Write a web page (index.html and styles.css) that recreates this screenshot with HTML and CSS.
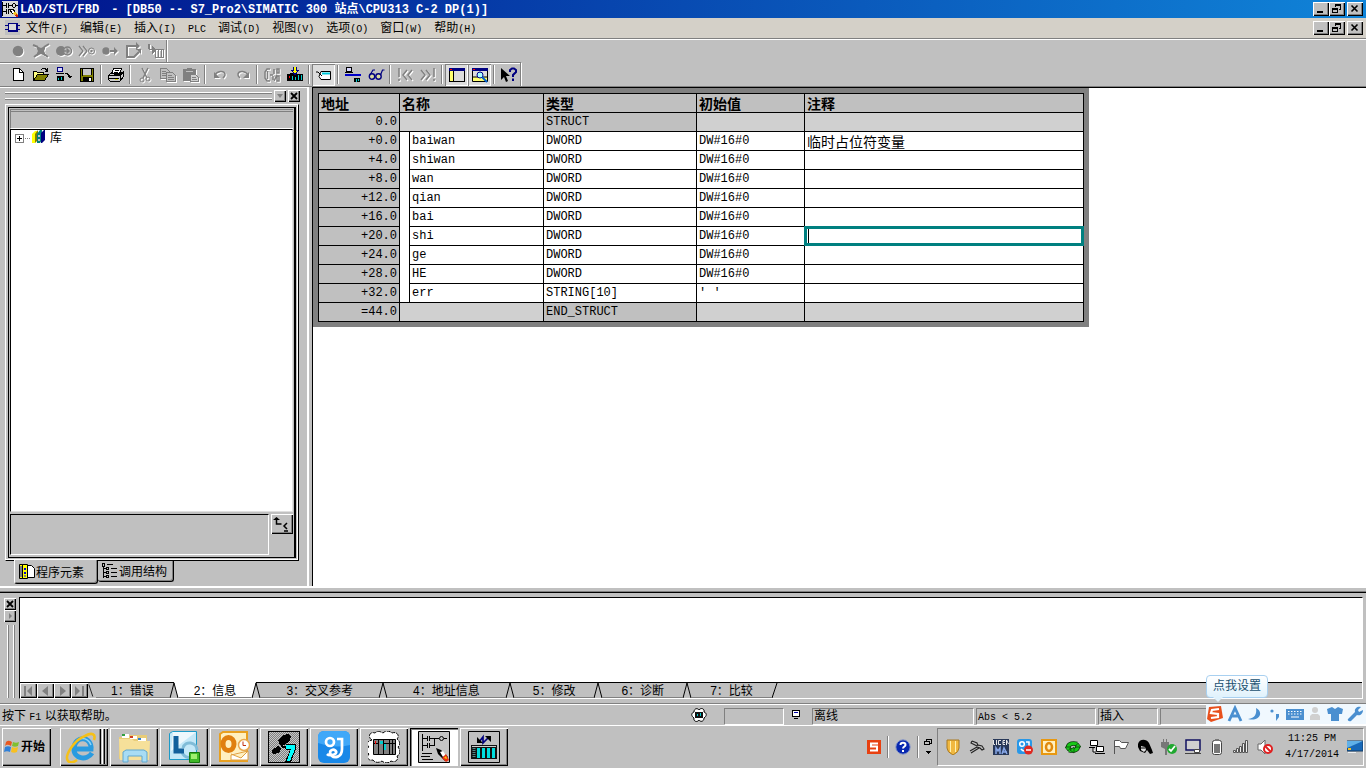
FILE: index.html
```html
<!DOCTYPE html>
<html lang="zh-CN">
<head>
<meta charset="utf-8">
<title>LAD/STL/FBD - DB50</title>
<link rel="stylesheet" href="styles.css">
</head>
<body>
<header class="titlebar">
  <svg class="app-icon" width="16" height="16" viewBox="0 0 16 16" shape-rendering="crispEdges"><path fill="#d8d8d8" d="M0 0h16v16H0z"/><path fill="none" stroke="#000" d="M.500 1v14M1 4.500h3M4.500 2v5M6.500 2v5M7 4.500h3M10.500 3v3M13.500 3v3M11 2.500h2M11 6.500h2M14 4.500h2M1 10.500h3M4.500 8v5M6.500 8v5"/><path fill="#fff" stroke="#000" d="M7 8l4 0 2 3-2 2z"/><path fill="#f0c020" d="M11 12l2-2 3 4-2 2z"/><path fill="#d02010" d="M13 14l2-2 1 4h-2z"/></svg>
  <h1 class="title"><span>LAD/STL/FBD</span><span>- [DB50 -- S7_Pro2\SIMATIC 300 站点\CPU313 C-2 DP(1)]</span></h1>
  <div class="winbtns">
    <button class="wb" aria-label="最小化"><svg width="12" height="10" viewBox="0 0 12 10"><path fill="#000" d="M2 7h6v2H2z"/></svg></button>
    <button class="wb" aria-label="还原"><svg width="12" height="10" viewBox="0 0 12 10" shape-rendering="crispEdges"><path fill="none" stroke="#000" d="M4.500 3V.5h5v5H8M4 1.500h6M1.500 4.500h5v4h-5zM1 5.500h6"/></svg></button>
    <button class="wb wb-close" aria-label="关闭"><svg width="12" height="10" viewBox="0 0 12 10"><path stroke="#000" stroke-width="1.600" d="M2.500 1.500l6 6M8.500 1.500l-6 6"/></svg></button>
  </div>
</header>

<nav class="menubar" aria-label="菜单">
  <svg class="doc-icon" width="15" height="15" viewBox="0 0 15 15" shape-rendering="crispEdges"><path fill="#c0c0c0" d="M0 0h15v15H0z"/><path fill="#000080" d="M3 3h10v9H3z"/><path fill="#d8d8d8" d="M4 4h7v6H4z"/><path stroke="#000080" d="M0 5.500h3M0 9.500h3M12 5.500h3M12 9.500h3"/></svg>
  <button>文件<span class="lat">(F)</span></button>
  <button>编辑<span class="lat">(E)</span></button>
  <button>插入<span class="lat">(I)</span></button>
  <button><span class="lat">PLC</span></button>
  <button>调试<span class="lat">(D)</span></button>
  <button>视图<span class="lat">(V)</span></button>
  <button>选项<span class="lat">(O)</span></button>
  <button>窗口<span class="lat">(W)</span></button>
  <button>帮助<span class="lat">(H)</span></button>
  <div class="winbtns">
    <button class="wb" aria-label="最小化文档"><svg width="12" height="10" viewBox="0 0 12 10"><path fill="#000" d="M2 7h6v2H2z"/></svg></button>
    <button class="wb" aria-label="还原文档"><svg width="12" height="10" viewBox="0 0 12 10" shape-rendering="crispEdges"><path fill="none" stroke="#000" d="M4.500 3V.5h5v5H8M4 1.500h6M1.500 4.500h5v4h-5zM1 5.500h6"/></svg></button>
    <button class="wb wb-close" aria-label="关闭文档"><svg width="12" height="10" viewBox="0 0 12 10"><path stroke="#000" stroke-width="1.600" d="M2.500 1.500l6 6M8.500 1.500l-6 6"/></svg></button>
  </div>
</nav>

<div class="toolrow">
  <div class="toolbar off">
    <button aria-label="断点"><svg viewBox="0 0 16 16"><circle cx="8" cy="8" r="5.300" fill="#808080"/></svg></button>
    <button aria-label="删除断点"><svg viewBox="0 0 16 16"><path fill="#808080" d="M4 3l4 2 4-2v3l-1 2 1 2v3l-4-2-4 2v-3l1-2-1-2z"/><path fill="none" stroke="#808080" stroke-width="2" d="M0 2l5 2M1 14l4-3M16 1l-5 3M15 14l-4-3"/></svg></button>
    <button aria-label="断点激活"><svg viewBox="0 0 16 16"><circle cx="5" cy="8" r="5" fill="#808080"/><circle cx="11.500" cy="8" r="4" fill="#c0c0c0" stroke="#808080" stroke-width="1.500"/><path fill="none" stroke="#808080" stroke-width="1.500" d="M7 8h6M10.500 5.500l2.500 2.500-2.500 2.500"/></svg></button>
    <button aria-label="下一断点"><svg viewBox="0 0 16 16"><path fill="none" stroke="#808080" stroke-width="1.300" d="M0 3l4 5-4 5M4 3l4 5-4 5"/><circle cx="12.500" cy="8" r="3" fill="none" stroke="#808080"/><circle cx="12.500" cy="8" r="1.200" fill="#808080"/></svg></button>
    <button aria-label="恢复"><svg viewBox="0 0 16 16"><circle cx="4" cy="8" r="3.700" fill="#808080"/><path fill="#808080" d="M8 7h4V4l4 4-4 4V9H8z"/></svg></button>
    <button aria-label="执行语句"><svg viewBox="0 0 16 16"><path fill="none" stroke="#808080" stroke-width="2" d="M2 2v12M1 3h11M1 14h8l5-5"/><path fill="#808080" d="M11-1l4 4-4 4zM11 6h5v5z"/></svg></button>
    <button aria-label="执行调用"><svg viewBox="0 0 16 16" shape-rendering="crispEdges"><path fill="none" stroke="#808080" d="M.5 1v5M1.500 1v5M1 6.500h4M7.500 6.500h8v8h-8zM10.500 7v8M13.500 7v8"/><path fill="#808080" d="M4 3l4 4-4 4z"/></svg></button>
  </div>
</div>
<div class="toolrow">
  <div class="toolbar">
    <button aria-label="新建"><svg viewBox="0 0 16 16" shape-rendering="crispEdges"><path fill="#fff" stroke="#000" d="M3.500 1.500h6l4 4v8h-10z"/><path fill="none" stroke="#000" d="M9.500 1.500v4h4"/></svg></button>
    <button aria-label="打开"><svg viewBox="0 0 16 16" shape-rendering="crispEdges"><path fill="#ffff80" stroke="#000" d="M.5 13.500v-9h3l1 1h6v2"/><path fill="#808000" stroke="#000" d="M.5 13.500l4-6h11l-4 6z"/><path fill="none" stroke="#000" d="M8 2.500l2-1h2l2 2M14.500 1v3h-3"/></svg></button>
    <button aria-label="在线打开"><svg viewBox="0 0 16 16" shape-rendering="crispEdges"><path fill="#d8d8ff" stroke="#000080" d="M1.500.5h5v4h-5z"/><path stroke="#000" d="M0 6.500h8"/><path fill="none" stroke="#000" d="M9 6.500h2l2 2v1"/><path fill="#000" d="M1 9h7v5H1zM11 9h5l-2 2z"/><path fill="#0cc" d="M2 11h1v2H2zM5 10h1v3H5z"/></svg></button>
    <button aria-label="保存"><svg viewBox="0 0 16 16" shape-rendering="crispEdges"><path fill="#808000" stroke="#000" d="M1.500 1.500h13v13h-13z"/><path fill="#c8c8c8" d="M4 2h8v6H4z"/><path fill="#000" d="M4 10h9v5H4zM12 2h1v6h-1zM3 2h1v7H3z"/><path fill="#fff" d="M10 11h2v3h-2z"/></svg></button>
    <i></i>
    <button aria-label="打印"><svg viewBox="0 0 16 16" shape-rendering="crispEdges"><path fill="#fff" stroke="#000" d="M3.500 7l2-5.500h8L11.500 7"/><path fill="#ccc" stroke="#000" d="M.5 8.500l2-2h10l3-2v5l-4 5h-9l-2-2z"/><path stroke="#000" d="M1 8.500h11l3-3M1 11.500h10M7 3.500h4M6 5.500h4M12 9v5"/><path fill="#dd0" d="M7 12h3v1H7z"/></svg></button>
    <i></i>
    <button class="dis" aria-label="剪切"><svg viewBox="0 0 16 16"><path fill="none" stroke="#808080" stroke-width="1.500" d="M5 1l5 10M11 1L6 11"/><circle cx="5" cy="13" r="2" fill="none" stroke="#808080"/><circle cx="11" cy="12" r="2" fill="none" stroke="#808080"/></svg></button>
    <button class="dis" aria-label="复制"><svg viewBox="0 0 16 16" shape-rendering="crispEdges"><path fill="#c0c0c0" stroke="#808080" d="M.5 1.500h6l3 3v7h-9z"/><path fill="#c0c0c0" stroke="#808080" d="M6.500 5.500h6l3 3v6h-9z"/><path stroke="#808080" d="M2 4.500h4M2 6.500h4M2 8.500h4M8 8.500h4M8 10.500h6M8 12.500h6"/></svg></button>
    <button class="dis" aria-label="粘贴"><svg viewBox="0 0 16 16" shape-rendering="crispEdges"><path fill="#808080" d="M0 2h4V1h5v1h4v12H0z"/><path stroke="#c0c0c0" d="M3 4.500h7"/><path fill="#d0d0d0" stroke="#808080" d="M7.500 7.500h5l3 3v4h-8z"/><path stroke="#808080" d="M9 10.500h4M9 12.500h5"/></svg></button>
    <i></i>
    <button class="dis" aria-label="撤销"><svg viewBox="0 0 16 16"><path fill="none" stroke="#808080" stroke-width="1.500" d="M3 8c2-4 9-5 10-1 .5 2-1 3-2 4"/><path fill="#808080" d="M2 5v6h6z"/></svg></button>
    <button class="dis" aria-label="重做"><svg viewBox="0 0 16 16"><path fill="none" stroke="#808080" stroke-width="1.500" d="M13 8C11 4 4 3 3 7c-.5 2 1 3 2 4"/><path fill="#808080" d="M14 5v6H8z"/></svg></button>
    <i></i>
    <button class="dis" aria-label="调用"><svg viewBox="0 0 16 16"><path fill="none" stroke="#808080" stroke-width="1.500" d="M6 2H3L1 5v6l2 3h3M3.500 4v8M6 8h3M10 2v5M13 2v4h2V2zM13 8l-3 6M9 9v4M13 9v5h2V9z"/></svg></button>
    <button aria-label="下载"><svg viewBox="0 0 16 16" shape-rendering="crispEdges"><path fill="#000" d="M0 7h3V6h4v1h9v7H0z"/><path fill="#f00" d="M2 9h1v2H2z"/><path fill="#0cc" d="M5 9h1v4H5zM8 10h1v3H8zM11 8h1v5h-1zM14 8h1v5h-1z"/><path fill="#000080" d="M6 0h4v3h2L8 9 4 3h2z"/><path fill="#ff0" d="M7 0h2v4h1L8 7 6 4h1z"/></svg></button>
    <i></i>
    <button class="pressed" aria-label="符号"><svg viewBox="0 0 16 16"><path fill="#fff" stroke="#000" d="M5 4.500h9.500v8H5l-2-3z"/><path stroke="#00c8d8" stroke-width="2" d="M6 6.500h8"/><path fill="none" stroke="#000" d="M0 5h2l4 4"/></svg></button>
    <i></i>
    <button aria-label="网络"><svg viewBox="0 0 16 16" shape-rendering="crispEdges"><path fill="#d8d8ff" stroke="#000" d="M1.500.5h5v4h-5zM0 5.500h8"/><path fill="#0000c8" d="M0 7h16v2H0z"/><path fill="#000" d="M9 11h6v4H9z"/><path fill="#0cc" d="M11 12h1v3h-1zM13 12h1v2h-1z"/></svg></button>
    <button aria-label="监视"><svg viewBox="0 0 16 16"><circle cx="4" cy="9.500" r="2.700" fill="#dddda0" stroke="#000080" stroke-width="1.400"/><circle cx="10.500" cy="9.500" r="2.700" fill="#dddda0" stroke="#000080" stroke-width="1.400"/><path fill="none" stroke="#000080" stroke-width="1.200" d="M2 8l3-5h2M12.500 8l2-5h2"/></svg></button>
    <i></i>
    <button class="dis" aria-label="上一错误"><svg viewBox="0 0 16 16"><path fill="none" stroke="#808080" stroke-width="1.500" d="M2 1v9M2 12v2M10 3L6 8l4 5M15 3l-4 5 4 5"/></svg></button>
    <button class="dis" aria-label="下一错误"><svg viewBox="0 0 16 16"><path fill="none" stroke="#808080" stroke-width="1.500" d="M14 1v9M14 12v2M1 3l4 5-4 5M6 3l4 5-4 5"/></svg></button>
    <i></i>
    <button class="pressed" aria-label="总览"><svg viewBox="0 0 16 16" shape-rendering="crispEdges"><path fill="#dcdcdc" stroke="#000" d="M.5 1.500h15v13H.5z"/><path fill="#000080" d="M0 1h16v3H0z"/><path fill="#f00" d="M1 2h2v1H1z"/><path fill="#ffff70" d="M1 4h3v10H1z"/><path fill="#000" d="M4 4h1v10H4z"/></svg></button>
    <button class="pressed" aria-label="详细信息"><svg viewBox="0 0 16 16"><path fill="#dcdcdc" stroke="#000" d="M.5 1.500h15v13H.5z"/><path fill="#000080" d="M0 1h16v3H0z"/><path fill="#ffff70" d="M1 10h14v4H1z"/><path stroke="#000" d="M0 10h15"/><path fill="#f00" d="M1 2h2v1H1z"/><circle cx="8" cy="8" r="3" fill="#aff" stroke="#008"/><path stroke="#0060d0" stroke-width="2" d="M10 10l5 5"/></svg></button>
    <i></i>
    <button aria-label="帮助"><svg viewBox="0 0 16 16"><path fill="#000" d="M0 1v12l3-3 2 5 2-1-2-5h4z"/><path fill="none" stroke="#000080" stroke-width="2" d="M9 5V3l2-1.500h2L15 3v2l-3 3v2M12 11.500v2.500"/></svg></button>
  </div>
</div>

<main class="work">
  <aside class="side">
    <div class="grip-row">
      <div class="grip"></div>
      <button class="mini" aria-label="展开"><svg width="8" height="8" viewBox="0 0 8 8"><path fill="#808080" d="M1 2h6L4 6z"/></svg></button>
      <button class="mini" aria-label="关闭面板"><svg width="8" height="8" viewBox="0 0 8 8"><path stroke="#000" stroke-width="1.800" d="M1 1l6 6M7 1L1 7"/></svg></button>
    </div>
    <div class="frame"><div class="frame-in">
      <div class="side-head"></div>
      <div class="tree">
        <button class="plus" aria-label="展开库"><svg width="9" height="9" viewBox="0 0 9 9" shape-rendering="crispEdges"><path fill="#fff" stroke="#808080" d="M.5.5h8v8h-8z"/><path stroke="#000" d="M2 4.500h5M4.500 2v5"/></svg></button><span class="dots"></span>
        <svg width="14" height="14" viewBox="0 0 14 14"><path fill="#ff0" d="M0 4l3-3h2v9l-2 3H0z"/><path fill="#808000" d="M3 4l3-4v10l-3 3z"/><path fill="#008080" d="M5 4l3-4h2v10l-2 3H5z"/><path fill="#c0c0c0" d="M6 5h2v2H6zM6 9h2v2H6z"/><path fill="#000080" d="M9 3l3-3h1v10l-3 3H9z"/></svg>
        <span>库</span>
      </div>
      <div class="side-foot">
        <div class="info"></div>
        <button class="updown" aria-label="切换"><svg width="18" height="16" viewBox="0 0 18 16"><path fill="none" stroke="#000" stroke-width="1.500" d="M4.500 2v6h5M15 7l-3 3 3 3M12 15h4"/><path fill="#000" d="M1 4l3.500-3L8 4z"/></svg></button>
      </div>
    </div></div>
    <div class="side-tabs">
      <button class="stab on"><svg width="16" height="16" viewBox="0 0 16 16"><path fill="#fff" stroke="#000" d="M8.500 1.500h4l3 3v9h-7z"/><path fill="#ff0" stroke="#000" d="M.5.5h3v14h-3zM3.500.5h5v14h-5z"/><path fill="#00c" d="M5 4h2v2H5zM5 8h2v2H5z"/><path fill="#808080" d="M5 11h2v2H5zM1 2h2v11H1z"/></svg><span>程序元素</span></button>
      <button class="stab"><svg width="16" height="16" viewBox="0 0 16 16" shape-rendering="crispEdges"><path fill="none" stroke="#000" d="M.5 0h2v3h-2zM1.500 3v11.500M2 5.500h2M2 9.500h2M2 13.500h2M4.500 4.500h2v2h-2zM4.500 8.500h2v2h-2zM4.500 12.500h2v2h-2zM5 1.500h6M9 5.500h6M9 9.500h6M9 13.500h6"/></svg><span>调用结构</span></button>
    </div>
  </aside>
  <div class="split"></div>
  <section class="doc">
    <div class="sheet">
      <table class="decl">
        <colgroup><col class="c-addr"><col class="c-ind"><col class="c-name"><col class="c-type"><col class="c-init"><col class="c-note"></colgroup>
        <thead><tr><th>地址</th><th colspan="2">名称</th><th>类型</th><th>初始值</th><th>注释</th></tr></thead>
        <tbody>
          <tr class="edge"><td>0.0</td><td colspan="2"></td><td>STRUCT</td><td></td><td></td></tr>
          <tr><td>+0.0</td><td class="ind"></td><td>baiwan</td><td>DWORD</td><td>DW#16#0</td><td class="cjk">临时占位符变量</td></tr>
          <tr><td>+4.0</td><td class="ind"></td><td>shiwan</td><td>DWORD</td><td>DW#16#0</td><td></td></tr>
          <tr><td>+8.0</td><td class="ind"></td><td>wan</td><td>DWORD</td><td>DW#16#0</td><td></td></tr>
          <tr><td>+12.0</td><td class="ind"></td><td>qian</td><td>DWORD</td><td>DW#16#0</td><td></td></tr>
          <tr><td>+16.0</td><td class="ind"></td><td>bai</td><td>DWORD</td><td>DW#16#0</td><td></td></tr>
          <tr><td>+20.0</td><td class="ind"></td><td>shi</td><td>DWORD</td><td>DW#16#0</td><td class="editing"><input type="text" aria-label="shi 注释"></td></tr>
          <tr><td>+24.0</td><td class="ind"></td><td>ge</td><td>DWORD</td><td>DW#16#0</td><td></td></tr>
          <tr><td>+28.0</td><td class="ind"></td><td>HE</td><td>DWORD</td><td>DW#16#0</td><td></td></tr>
          <tr><td>+32.0</td><td class="ind last"></td><td>err</td><td>STRING[10]</td><td>' '</td><td></td></tr>
          <tr class="edge"><td>=44.0</td><td colspan="2"></td><td>END_STRUCT</td><td></td><td></td></tr>
        </tbody>
      </table>
    </div>
  </section>
</main>

<section class="output">
  <div class="out-grip">
    <button class="mini" aria-label="关闭输出"><svg width="8" height="8" viewBox="0 0 8 8"><path stroke="#000" stroke-width="1.800" d="M1 1l6 6M7 1L1 7"/></svg></button>
    <button class="mini" aria-label="展开输出"><svg width="8" height="8" viewBox="0 0 8 8"><path fill="#808080" d="M3 1v6l3-3z"/></svg></button>
    <div class="vgrip"></div>
  </div>
  <div class="out-box">
    <div class="out-text"></div>
    <div class="out-tabs">
      <button class="nav" aria-label="第一个"><svg viewBox="0 0 13 12"><path fill="#808080" d="M2 1h2v10H2zM10 1v10L5 6z"/></svg></button>
      <button class="nav" aria-label="上一个"><svg viewBox="0 0 13 12"><path fill="#808080" d="M9 1v10L3 6z"/></svg></button>
      <button class="nav" aria-label="下一个"><svg viewBox="0 0 13 12"><path fill="#808080" d="M4 1v10l6-5z"/></svg></button>
      <button class="nav" aria-label="最后一个"><svg viewBox="0 0 13 12"><path fill="#808080" d="M2 1v10l5-5zM9 1h2v10H9z"/></svg></button>
      <svg class="sl sl-first" viewBox="0 0 10 15"><path fill="none" stroke="#000" d="M1 0l5 15"/></svg>
      <button class="ot s">1：错误</button>
      <svg class="sl" viewBox="0 0 10 15"><path fill="#fff" d="M5-1l4 16h1V-1z"/><path fill="none" stroke="#000" d="M1 15L5 0l4 15"/></svg>
      <button class="ot s on">2：信息</button>
      <svg class="sl" viewBox="0 0 10 15"><path fill="#fff" d="M0-1h5L1 15H0z"/><path fill="none" stroke="#000" d="M1 15L5 0l4 15"/></svg>
      <button class="ot l">3：交叉参考</button>
      <svg class="sl" viewBox="0 0 10 15"><path fill="none" stroke="#000" d="M1 15L5 0l4 15"/></svg>
      <button class="ot l">4：地址信息</button>
      <svg class="sl" viewBox="0 0 10 15"><path fill="none" stroke="#000" d="M1 15L5 0l4 15"/></svg>
      <button class="ot">5：修改</button>
      <svg class="sl" viewBox="0 0 10 15"><path fill="none" stroke="#000" d="M1 15L5 0l4 15"/></svg>
      <button class="ot">6：诊断</button>
      <svg class="sl" viewBox="0 0 10 15"><path fill="none" stroke="#000" d="M1 15L5 0l4 15"/></svg>
      <button class="ot">7：比较</button>
      <svg class="sl" viewBox="0 0 10 15"><path fill="none" stroke="#000" d="M1 15L6 0"/></svg>
    </div>
  </div>
</section>

<footer class="status">
  <span class="hint">按下 <span class="lat">F1</span> 以获取帮助。</span>
  <svg class="cloud" width="16" height="14" viewBox="0 0 16 14"><path fill="#fff" stroke="#000" d="M3 4c0-4 4-4 5-2 2-3 6-1 5 2 3 1 3 4 0 6 0 4-4 4-5 2-2 3-6 1-5-2-3-2-3-5 0-6z"/><path fill="#111" d="M4 4h8v6H4z"/><path fill="#0cc" d="M6 6h1v2H6zM9 5h1v3H9z"/></svg>
  <div class="field f1"></div>
  <svg class="mon" width="10" height="10" viewBox="0 0 10 10" shape-rendering="crispEdges"><path fill="#fff" stroke="#000" d="M.5.5h7v6h-7zM2 8.500h4"/><path fill="#00a" d="M2 2h4v1H2z"/></svg>
  <div class="field f2">离线</div>
  <div class="field f3"><span class="lat">Abs &lt; 5.2</span></div>
  <div class="field f4">插入</div>
  <div class="field f5"></div>
  <div class="ime">
    <svg viewBox="0 0 18 18"><path fill="#e8501c" d="M3 2l12-1 2 12-12 4-4-3z"/><path fill="none" stroke="#fff" stroke-width="2.200" d="M13 4L6 5 5 8l7 1v3l-7 1"/></svg>
    <svg viewBox="0 0 18 18"><path fill="none" stroke="#4a8fd0" stroke-width="2.800" d="M3 16L9 3l6 13M5 11h8"/></svg>
    <svg viewBox="0 0 18 18"><path fill="#4a8fd0" d="M10 3c8 4 4 14-8 11 7-1 9-5 8-11z"/></svg>
    <svg viewBox="0 0 18 18"><circle cx="6" cy="6" r="1.600" fill="#4a8fd0"/><path fill="#4a8fd0" d="M10 9h3v3l-3 4z"/></svg>
    <svg viewBox="0 0 18 18"><path fill="#4a8fd0" d="M0 4h18v11H0z"/><path stroke="#fff" stroke-dasharray="1.500 1.500" d="M2 6.500h14M2 9h14"/><path stroke="#fff" d="M5 12h8"/></svg>
    <svg viewBox="0 0 18 18"><circle cx="9" cy="5" r="3" fill="#d0d0d0"/><path fill="#d0d0d0" d="M4 15v-4l2-2h6l2 2v4z"/></svg>
    <svg viewBox="0 0 18 18"><path fill="#4a8fd0" d="M1 4l5-2 3 2 3-2 5 2-1 5h-3v7H5V9H2z"/></svg>
    <svg viewBox="0 0 18 18"><path fill="#4a8fd0" d="M2 14l7-7c-1-4 3-6 6-5l-3 3 1 2 4-2c0 4-3 6-6 5l-6 6c-2 1-4-1-3-2z"/></svg>
    <div class="bubble">点我设置</div>
  </div>
</footer>

<div class="taskbar">
  <button class="start"><svg width="16" height="14" viewBox="0 0 16 14"><path fill="#e85820" d="M2 2c2-2 4-1 6 0L7 6C5 5 3 4 1 6z"/><path fill="#80c030" d="M9 2c2 1 4 1 6 0l-1 4c-2 1-4 1-6 0z"/><path fill="#3080d8" d="M1 7c2-1 4-1 6 0l-1 5c-2-1-4-1-6 0z"/><path fill="#f8c020" d="M8 7c2 1 4 1 6 0l-1 5c-2 1-4 1-6 0z"/></svg><span>开始</span></button>
  <div class="apps">
    <button class="app multi" aria-label="Internet Explorer"><svg viewBox="0 0 32 32"><path fill="none" stroke="#2a9be0" stroke-width="5" d="M27 22c-5 8-19 6-18-5C10 4 27 5 26 18H10"/><path fill="none" stroke="#8fd4f8" stroke-width="1.500" d="M9 14c3-8 13-9 17 0"/><path fill="none" stroke="#f5c018" stroke-width="2.600" d="M29 9c2-6-2-8-9-4C9 9-1 25 3 30c2 2 6 1 9-1"/></svg></button>
    <button class="app" aria-label="资源管理器"><svg viewBox="0 0 32 32"><path fill="#e8cc78" d="M1 6h8l2-2h18v24H1z"/><path fill="#fff" d="M4 3h7v4H4zM12 5h7v3h-7zM20 7h8v3h-8z"/><path fill="#30a040" d="M4 3h3v2H4z"/><path fill="#d04020" d="M12 5h3v2h-3z"/><path fill="#3080d0" d="M20 7h3v2h-3z"/><path fill="#f6e09a" d="M1 8h13l2 2h16l-1 19H2z"/><path fill="#a8dcf4" stroke="#60a8d0" d="M5 31V21l3-2h18l3 2v10h-5v-6H10v6z"/></svg></button>
    <button class="app" aria-label="Lync"><svg viewBox="0 0 32 32"><path fill="#c4e8f8" stroke="#1c9ac8" d="M1.500 2.500l3-2h24v28h-27z"/><path fill="#fff" opacity=".7" d="M5 1h23L3 20z"/><path fill="none" stroke="#80bcd8" stroke-width="3" d="M15 17c2-8 14-6 14 2M28 23c-4 6-12 4-14-2"/><path fill="none" stroke="#12609c" stroke-width="5" d="M8 5v15h8"/><path fill="#40b828" stroke="#187810" d="M21.500 21.500h10v10h-10z"/><path fill="#a0f070" d="M23 23h6v5h-6z"/></svg></button>
    <button class="app" aria-label="Outlook"><svg viewBox="0 0 32 32"><path fill="#fff0c0" stroke="#e8a020" stroke-width="2" d="M2 3l3-2h24v29H2z"/><ellipse cx="10.500" cy="13" rx="5.500" ry="6.500" fill="none" stroke="#e08010" stroke-width="5"/><path fill="#fff" stroke="#e0a040" d="M13 24l17-4v9H13zM13 23l10 4 7-7"/><circle cx="26" cy="14" r="5.500" fill="#fff" stroke="#e8a850" stroke-width="1.500"/><path fill="none" stroke="#c03010" d="M25 10.500v4h3"/></svg></button>
    <button class="app" aria-label="SIMATIC"><svg viewBox="0 0 32 32" shape-rendering="crispEdges"><defs><pattern id="dither" width="2" height="2" patternUnits="userSpaceOnUse"><path fill="#c8c8c8" d="M0 0h2v2H0z"/><path fill="#808080" d="M0 0h1v1H0zM1 1h1v1H1z"/></pattern></defs><path fill="url(#dither)" stroke="#000" d="M.5.5h31v31H.5z"/><path fill="#000" d="M10 9l5-5 6-1 2 3-2 5-5 3h-4zM4 19l6-4 3 3-1 3-6 2-2-1zM13 14l8 2v3l-8-3zM18 13h10v5l-5 13h-6l5-12h-4z"/><path fill="#0ff" d="M18 14h9v4l-5 12h-3l4-12h-5z"/></svg></button>
    <button class="app" aria-label="云聊"><svg viewBox="0 0 32 32"><rect width="32" height="32" rx="6" fill="#1888e8"/><path fill="#40a8f8" d="M6 0h20q6 0 6 6v8Q16 18 0 12V6q0-6 6-6z"/><circle cx="12" cy="11" r="4" fill="none" stroke="#fff" stroke-width="2.700"/><path fill="none" stroke="#fff" stroke-width="2.700" d="M19 8h5v10c0 9-8 9-10 7s-3-5 0-6c2-1 5 1 4 3s-7 3-9 1"/></svg></button>
    <button class="app" aria-label="硬件"><svg viewBox="0 0 32 32"><path fill="#fff" stroke="#000" stroke-dasharray="4 1" d="M4 9C-1 6 2 0 7 2c3-3 6-1 8 0 3-3 7-2 9 0 5-2 8 3 5 6 4 3 3 6 1 8 3 4 2 8-1 9 2 4-2 7-6 5-3 3-7 2-9 0-3 2-7 2-9-1-5 1-7-3-4-6-4-3-3-6 0-7-3-3-2-6 3-7z"/><path fill="#808080" stroke="#000" d="M5.500 8.500h22v15h-22zM10.500 8.500v15M15.500 8.500v15M21.500 8.500v15M24.500 8.500v15M6 12.500h4M16 12.500h11"/><path fill="#0cc" d="M12 10h3v3h-3zM16 13h2v6h-2z"/><path fill="#f00" d="M7 10h1v3H7z"/></svg></button>
    <button class="app on" aria-label="LAD/STL/FBD"><svg viewBox="0 0 32 32"><path fill="#c4c4c4" stroke="#000" d="M.5.5h31v31H.5z"/><path fill="none" stroke="#000" d="M4.500 3v17M5 7.500h4M9.500 5v5M11.500 5v5M12 7.500h9M26 7.500h3M5 14.500h4M9.500 12v5M11.500 12v5M12 14.500h4M16.500 8v7M4 22.500h10M3 25.500h9M4 28.500h11"/><circle cx="23.500" cy="7.500" r="2" fill="none" stroke="#000"/><path fill="#000" d="M18 17l5 2 7 7-3 4-7-7z"/><path fill="#fff" d="M22 21l3-1 3 4-3 2z"/><path fill="#e83010" d="M24 27l4-4 3 6-3 2z"/><path fill="#fc0" d="M26 27l2-2 1 3z"/></svg></button>
    <button class="app" aria-label="通讯"><svg viewBox="0 0 32 32"><path fill="#c0c0c0" stroke="#000" d="M.5.5h31v31H.5z"/><path fill="none" stroke="#000080" stroke-width="1.700" d="M11 11l4-5v6l6-6"/><path fill="#000" d="M9 6v6h6zM17 5h6v6z"/><path fill="#111" d="M3 14h26v14H3z"/><path fill="#0dd" d="M9 17h3v10H9zM14 17h3v10h-3zM19 17h3v10h-3zM24 17h3v10h-3z"/><path stroke="#ccc" d="M4 15.500h24"/><path stroke="#588" stroke-width="3" stroke-dasharray="1 1" d="M6 17v10"/></svg></button>
  </div>
  <div class="lang">
    <svg width="14" height="14" viewBox="0 0 14 14"><path fill="#e84010" d="M0 0h14v14H0z"/><path fill="none" stroke="#fff" stroke-width="2" d="M11 3.500H4v3h6v4H3"/></svg>
    <i></i>
    <svg width="16" height="16" viewBox="0 0 16 16"><circle cx="8" cy="8" r="7.200" fill="#0828b0" stroke="#8898c8"/><path fill="none" stroke="#fff" stroke-width="2" d="M5.500 6c0-3 5-3 5 0 0 1.500-2.500 1.500-2.500 3.500M8 11v2"/></svg>
    <i></i>
    <svg width="9" height="16" viewBox="0 0 9 16" shape-rendering="crispEdges"><path fill="none" stroke="#000" d="M2.500 2V.5h5v4H6M.5 2.500h5v3h-5z"/><path fill="#000" d="M1 12h6l-3 3z"/></svg>
  </div>
  <div class="tray">
    <svg viewBox="0 0 16 16"><path fill="#f0b840" stroke="#a87820" d="M2 1h12v8q0 4-6 7-6-3-6-7z"/><path stroke="#fff0b0" d="M5.500 2v11M10.500 2v11"/></svg>
    <svg viewBox="0 0 16 16"><path fill="none" stroke="#222" stroke-width="1.100" d="M3 2l5 2 1 3M3 2l-1 2 6 3M9 6l4 1 2 3-2 1-2-2-3-1M1 12l7-4M2 14l8-5"/></svg>
    <svg viewBox="0 0 16 16"><path fill="#283858" d="M0 0h16v16H0z"/><path fill="none" stroke="#e8e8e8" d="M.5 1v4.500H2M3.500 1v5M8 1.500H5.500v4H8M12 1.500h-2v4h2M10 3.500h2M13.500 6V1l2 4"/><path fill="none" stroke="#88a8e8" stroke-width="1.500" d="M3 15V9l2 3 2-3v6M9 15l2-6 3 6M10 13h4"/></svg>
    <svg viewBox="0 0 16 16"><rect width="15" height="15" rx="3" fill="#2898e8"/><circle cx="5" cy="5" r="2.300" fill="none" stroke="#fff" stroke-width="1.500"/><path fill="none" stroke="#fff" stroke-width="1.500" d="M9 3h3v5c0 5-6 5-8 2"/><circle cx="11.500" cy="11" r="4.500" fill="#e02820"/><path stroke="#fff" stroke-width="1.500" d="M9 11h5"/></svg>
    <svg viewBox="0 0 16 16"><path fill="#fff0c0" stroke="#e89810" stroke-width="2" d="M1 1h14v14H1z"/><ellipse cx="8" cy="8" rx="3" ry="4" fill="none" stroke="#e08a10" stroke-width="2.500"/></svg>
    <svg viewBox="0 0 16 16"><path fill="none" stroke="#083808" stroke-width="4.500" d="M3 9c0-5 6-5 9-4M13 7c0 5-6 5-9 4"/><path fill="none" stroke="#18c818" stroke-width="3" d="M3 9c0-5 6-5 9-4M13 7c0 5-6 5-9 4"/><path fill="#18c818" stroke="#083808" stroke-width=".7" d="M0 8h6l-3 4zM10 8h6l-3-4zM9 8v6l-4-3z"/></svg>
    <svg viewBox="0 0 16 16"><path fill="#fff" stroke="#000" d="M1.500 1.500h7v5h-7zM7.500 7.500h7v5h-7zM0 8.500h6M6 14.500h10M4 9v4h3"/></svg>
    <svg viewBox="0 0 16 16"><path fill="#fff" stroke="#555" d="M1.500 15V1.500h5l2 2h7l-3 6h-5l-1-2H2"/></svg>
    <svg viewBox="0 0 16 16"><path fill="#000" d="M1 5c1-5 8-6 11-1l3 7 1 3-3 1-3-4-2 3-5-2-2-4z"/><path fill="#ddd" d="M4 7l4 1 1 3-2 2-3-2z"/><path stroke="#000" d="M4 9h4"/></svg>
    <svg viewBox="0 0 16 16"><path fill="#777" d="M2 0h1v3h2V0h1v3h2v6L6 11v5H4v-6L0 8V3h2z"/><circle cx="11" cy="10" r="5" fill="#20a830"/><path fill="none" stroke="#fff" stroke-width="1.800" d="M8 10l2 2 4-5"/></svg>
    <svg viewBox="0 0 16 16"><path fill="#d0d0d0" stroke="#101060" stroke-width="1.500" d="M1 1h14v10H1z"/><path fill="#fff" stroke="#444" d="M0 14.500h16M9.500 10.500h5v3h-5z"/></svg>
    <svg viewBox="0 0 16 16"><rect x="3.500" y="1.500" width="9" height="14" rx="2" fill="#fff" stroke="#444"/><path fill="#777" d="M5 5h6v9H5zM6 0h4v2H6z"/></svg>
    <svg viewBox="0 0 16 16"><path fill="#eee" stroke="#555" d="M.5 11.500h2v2h-2zM3.500 9.500h2v4h-2zM6.500 7.500h2v6h-2zM9.500 4.500h2v9h-2zM12.500 1.500h2v12h-2z"/></svg>
    <svg viewBox="0 0 16 16"><path fill="#fff" stroke="#666" d="M1 5h3l4-4v14l-4-4H1z"/><circle cx="11" cy="10" r="4" fill="#fff" stroke="#e02020" stroke-width="2"/><path stroke="#e02020" stroke-width="2" d="M8 7l6 6"/></svg>
    <time class="clock">11:25 PM<br>4/17/2014</time>
    <svg viewBox="0 0 16 16"><path fill="#1868b8" stroke="#103860" d="M0 2h16v10H0z"/><path fill="#60b0e8" d="M0 2h16L0 9z"/><path fill="#f8c020" d="M1 9h3v2H1z"/><path fill="#eee" d="M1 13h8v1H1z"/></svg>
  </div>
</div>
</body>
</html>
```
FILE: styles.css
```css
* { box-sizing: border-box; }
html, body { height: 100%; }
body {
  margin: 0;
  display: flex;
  flex-direction: column;
  overflow: hidden;
  background: #c0c0c0;
  color: #000;
  font: 12px/16px "Liberation Sans", "Noto Sans CJK SC", sans-serif;
}
svg { display: block; flex: none; }
button {
  margin: 0;
  padding: 0;
  border: 0;
  background: none;
  color: inherit;
  font: inherit;
  white-space: nowrap;
}
.lat { font-family: "Liberation Mono", monospace; font-size: 10px; }

/* title and menu */
.titlebar {
  display: flex;
  align-items: center;
  flex: none;
  height: 18px;
  padding: 0 3px 0 2px;
  gap: 2px;
  background: linear-gradient(90deg, #00128c, #1084d8);
}
.title {
  display: flex;
  gap: 12px;
  margin: 0;
  padding-top: 2px;
  color: #fff;
  font: bold 12px/16px "Liberation Mono", "Noto Sans CJK SC", monospace;
  white-space: pre;
}
.winbtns { display: flex; margin-left: auto; }
.wb, .mini, .app, .start, .nav, .updown {
  background: #c0c0c0;
  box-shadow: inset 1px 1px #fff, inset -1px -1px #000, inset -2px -2px #808080;
}
.wb { width: 16px; height: 14px; padding: 2px; }
.wb-close { margin-left: 2px; }
.menubar {
  display: flex;
  align-items: center;
  flex: none;
  height: 22px;
  padding: 0 3px 2px 5px;
  background: #d4d0c8;
  border-bottom: 1px solid #fff;
  box-shadow: inset 0 -1px #808080;
}
.menubar > button { padding: 2px 6px 0; }

/* toolbars */
.toolrow {
  display: flex;
  flex: none;
  height: 24px;
}
.toolrow:first-of-type { height: 22px; }
.toolbar {
  display: flex;
  align-items: center;
  padding-left: 6px;
  border-right: 1px solid #fff;
  box-shadow: inset -1px 0 #808080;
}
.toolrow + .toolrow .toolbar {
  padding-right: 1px;
  border-top: 1px solid #808080;
  box-shadow: inset -1px 0 #808080, inset 0 1px #fff;
}
.toolbar button {
  display: grid;
  place-items: center;
  width: 23px;
  height: 22px;
}
.toolbar svg { width: 16px; height: 16px; overflow: visible; }
.toolbar i {
  width: 2px;
  height: 19px;
  margin: 0 2px;
  border-left: 1px solid #808080;
  border-right: 1px solid #fff;
}
.off svg, .dis svg { filter: drop-shadow(1px 1px 0 #fff); }
.toolbar .pressed {
  background: #dcdcdc;
  box-shadow: inset 1px 1px #808080, inset -1px -1px #fff;
}

/* work area */
.work {
  display: flex;
  flex: 1;
  min-height: 0;
  border-top: 1px solid #808080;
}
.side {
  display: flex;
  flex-direction: column;
  flex: none;
  width: 307px;
  padding: 2px 8px 1px 5px;
  border-top: 1px solid #fff;
}
.grip-row { display: flex; flex: none; height: 14px; gap: 2px; margin-right: -1px; }
.grip {
  flex: 1;
  height: 7px;
  margin-top: 2px;
  border: solid #fff;
  border-width: 1px 0;
  box-shadow: 0 1px #808080, inset 0 1px #808080;
}
.mini { display: grid; place-items: center; flex: none; width: 12px; height: 12px; }
.frame {
  display: flex;
  flex: 1;
  padding: 2px;
  border: 1px solid;
  border-color: #fff #000 #000 #fff;
  box-shadow: inset -1px -1px #fff;
}
.frame-in {
  display: flex;
  flex-direction: column;
  flex: 1;
  padding: 1px;
  border: 1px solid #000;
  border-right-width: 2px;
}
.side-head {
  flex: none;
  height: 20px;
  border: solid #808080;
  border-width: 3px 0 0 1px;
  border-top-style: double;
  border-bottom: 1px solid #fff;
}
.tree {
  display: flex;
  align-items: flex-start;
  flex: 1;
  padding: 0 4px;
  background: #fff;
  border: 1px solid;
  border-color: #000 #dfdfdf #dfdfdf #000;
}
.plus { margin-top: 4px; }
.dots { width: 5px; margin: 8px 2px 0 1px; border-top: 1px dotted #808080; }
.tree span:last-child { margin-left: 4px; }
.side-foot { display: flex; flex: none; height: 44px; padding-top: 2px; gap: 2px; }
.info {
  flex: 1;
  margin-bottom: 1px;
  border: 1px solid;
  border-color: #000 #fff #fff #000;
}
.updown { width: 22px; height: 20px; padding: 1px; }
.side-tabs { display: flex; flex: none; height: 24px; padding-left: 9px; }
.stab {
  display: flex;
  align-items: center;
  height: 21px;
  padding: 0 6px 0 4px;
  gap: 1px;
  border: 1px solid #000;
  border-width: 0 1px 1px 0;
  border-radius: 0 0 3px 3px;
  box-shadow: inset -1px -1px #808080;
}
.stab span { padding-top: 2px; }
.stab.on {
  height: 24px;
  padding-right: 13px;
  margin-top: -1px;
  background: #c0c0c0;
  border-left: 1px solid #fff;
}
.split {
  flex: none;
  width: 6px;
  border-left: 2px solid #fff;
  border-right: 1px solid #000;
}
.doc { flex: 1; overflow: hidden; background: #fff; border-top: 1px solid #000; }

/* declaration table */
.sheet { display: table; padding: 5px; background: #808080; }
.decl {
  table-layout: fixed;
  width: 766px;
  border-spacing: 0;
  border: solid #000;
  border-width: 1px 0 0 1px;
  font: 12px/18px "Liberation Mono", "Noto Sans CJK SC", monospace;
}
.c-addr { width: 81px; }
.c-ind { width: 10px; }
.c-name { width: 134px; }
.c-type { width: 153px; }
.c-init { width: 108px; }
.c-note { width: 279px; }
.decl th, .decl td {
  height: 19px;
  padding: 0 2px;
  background: #fff;
  border: solid #000;
  border-width: 0 1px 1px 0;
  text-align: left;
  white-space: nowrap;
}
.decl th {
  background: #c0c0c0;
  font: bold 14px/18px "Noto Sans CJK SC", sans-serif;
}
.decl td:first-child { background: #c0c0c0; text-align: right; }
.decl .ind { padding: 0; border-bottom-width: 0; }
.decl .ind.last { border-bottom-width: 1px; }
.decl .edge td { background: #d0d0d0; }
.decl .edge td:first-child, .decl .edge td:nth-child(3) { background: #c0c0c0; }
.decl .cjk { font: 14px/18px "Noto Sans CJK SC", sans-serif; }
.decl .editing { padding: 0; }
.editing input {
  display: block;
  width: 100%;
  height: 18px;
  padding: 0 4px;
  border: 0;
  background: linear-gradient(#000, #000) 3px 2px / 1px 14px no-repeat #fff;
  outline: 3px solid #008080;
  outline-offset: -2px;
  font: inherit;
}

/* output panel */
.output {
  display: flex;
  flex: none;
  height: 118px;
  padding: 4px 3px 4px 4px;
  border-top: 2px solid #fff;
  border-bottom: 1px solid #808080;
  background: linear-gradient(#808080, #808080) 0 3px / 100% 1px no-repeat, linear-gradient(#000, #000) 0 4px / 100% 1px no-repeat, #c0c0c0;
}
.out-grip { display: flex; flex-direction: column; flex: none; width: 15px; padding-top: 6px; }
.vgrip {
  flex: 1;
  width: 7px;
  margin: 3px 0 1px 3px;
  border: solid #fff;
  border-width: 0 1px;
  box-shadow: 1px 0 #808080, inset 1px 0 #808080;
}
.out-box {
  display: flex;
  flex-direction: column;
  flex: 1;
  margin-top: 5px;
  border: 1px solid;
  border-color: #000 #fff #fff #000;
}
.out-text { flex: 1; background: #fff; }
.out-tabs {
  display: flex;
  flex: none;
  height: 16px;
  border-top: 1px solid #000;
}
.nav { width: 17px; height: 15px; padding: 1px 2px; }
.nav svg { width: 13px; height: 12px; }
.sl { width: 10px; height: 15px; overflow: visible; }
.sl-first { width: 8px; }
.ot {
  height: 15px;
  padding: 0 18px;
  border-bottom: 1px solid #808080;
  line-height: 16px;
}
.ot.s { padding: 0 15px; }
.ot.l { padding: 0 25px; }
.ot.on { height: 16px; margin-top: -1px; padding-top: 1px; background: #fff; }

/* status bar */
.status {
  position: relative;
  display: flex;
  flex: none;
  height: 21px;
  padding: 3px 0 1px 2px;
  gap: 2px;
  border-top: 1px solid #fff;
  line-height: 16px;
}
.hint { flex: 1; }
.cloud { margin-right: 15px; }
.mon { margin: 2px 8px 0 6px; }
.field {
  height: 17px;
  padding-left: 1px;
  border: 1px solid;
  border-color: #808080 #fff #fff #808080;
  line-height: 15px;
}
.f1 { width: 60px; }
.f2 { width: 162px; }
.f3 { width: 120px; }
.f4 { width: 60px; }
.f5 { width: 206px; }
.ime {
  position: absolute;
  right: 0;
  top: -1px;
  display: flex;
  align-items: center;
  width: 160px;
  height: 20px;
  gap: 2px;
  background: #f0f8fe;
}
.ime svg { width: 18px; height: 18px; }
.bubble {
  position: absolute;
  left: 0;
  bottom: 26px;
  padding: 2px 6px;
  border: 1px solid #a8d0f0;
  border-radius: 4px;
  background: linear-gradient(#fff, #e0f2fc);
  color: #205070;
  line-height: 17px;
}
.bubble::after {
  content: "";
  position: absolute;
  left: 6px;
  top: 100%;
  border: 5px solid transparent;
  border-top-color: #e0f2fc;
  border-bottom: 0;
}

/* taskbar */
.taskbar {
  display: flex;
  align-items: center;
  flex: none;
  height: 43px;
  padding: 0 2px;
  border-top: 1px solid #fff;
}
.start {
  display: flex;
  align-items: center;
  width: 49px;
  height: 38px;
  padding-left: 2px;
  gap: 1px;
  font-weight: bold;
}
.apps { display: flex; gap: 2px; margin-left: 9px; }
.app { display: grid; place-items: center; width: 48px; height: 38px; }
.app svg { width: 32px; height: 32px; }
.multi {
  place-items: center start;
  padding-left: 5px;
  background: repeating-linear-gradient(90deg, #808080 0 1px, #000 1px 2px, #c0c0c0 2px 3px, #fff 3px 4px) right / 9px 100% no-repeat #c0c0c0;
}
.app.on { background: #fff; box-shadow: inset 1px 1px #000, inset 2px 2px #808080, inset -1px -1px #fff; }
.lang { display: flex; align-items: center; gap: 6px; margin: 0 4px 0 auto; }
.lang i { width: 2px; height: 22px; border-left: 1px solid #808080; border-right: 1px solid #fff; }
.lang svg:last-child { margin-left: -1px; }
.tray {
  display: flex;
  align-items: center;
  height: 38px;
  padding: 0 0 0 7px;
  gap: 8px;
  border: 1px solid;
  border-color: #808080 #fff #fff #808080;
}
.tray svg { width: 16px; height: 16px; }
.clock {
  width: 54px;
  margin-left: 4px;
  text-align: center;
  font: 10px/16px "Liberation Mono", monospace;
  white-space: nowrap;
}
```
